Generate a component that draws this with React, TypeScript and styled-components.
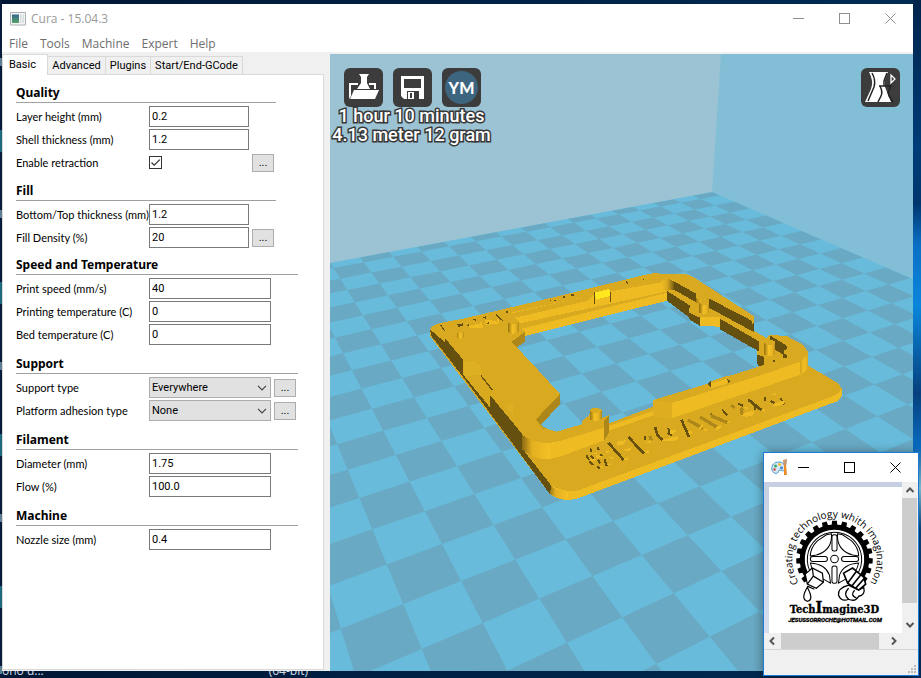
import React, { useId } from "react";
import styled, { createGlobalStyle } from "styled-components";

const Global = createGlobalStyle`
  * { box-sizing: border-box; }
  html, body, #root { height: 100%; margin: 0; }
  body { font-family: Roboto, "Liberation Sans", sans-serif; font-size: 11px; color: #000; overflow: hidden; }
  button, input, select { font: inherit; color: inherit; margin: 0; padding: 0; border-radius: 0; }
`;

/* ---------- desktop and windows ---------- */

const Desktop = styled.div`
  height: 100%;
  min-height: 400px;
  display: flex;
  flex-direction: column;
  padding: 4px 8px 0 2px;
  background:
    linear-gradient(#00244b, #003c78 22%, #00366e 30%, #0b6fc4 36%, #0a86dc 45%, #06407e 58%, #0a6cc0 66%, #8fdcf6 72%, #0a4d8e 78%, #06305f) right / 8px 100% no-repeat,
    repeating-linear-gradient(#0a1c3c 0 58px, #5c7f92 58px 66px, #061a3a 66px 130px, #1d6a80 130px 152px) left / 2px 100% no-repeat,
    linear-gradient(90deg, #001634, #002c55);
`;

const CuraWindow = styled.main`
  flex: 1;
  min-height: 0;
  display: flex;
  flex-direction: column;
  background: #fff;
`;

const TitleBar = styled.header`
  height: 29px;
  flex: none;
  display: flex;
  align-items: center;
  padding-left: 8px;
`;

const WindowTitle = styled.h1`
  flex: 1;
  margin: 0 0 0 5px;
  font: 400 12px "Open Sans", sans-serif;
  color: #999;
`;

const CaptionButton = styled.button<{ $width: number; $color: string }>`
  width: ${(p) => p.$width}px;
  height: 28px;
  flex: none;
  border: 0;
  background: none;
  display: grid;
  place-items: center;
  color: ${(p) => p.$color};
`;

const MenuBar = styled.nav`
  height: 19px;
  flex: none;
  display: flex;
  align-items: flex-end;
  gap: 12px;
  padding-left: 7px;
`;

const MenuItem = styled.button`
  border: 0;
  background: none;
  font: 12px/16px "Open Sans", sans-serif;
  color: #6d6d6d;
`;

const Body = styled.div`
  flex: 1;
  min-height: 0;
  display: flex;
  border-top: 2px solid #f0f0f0;
`;

/* ---------- settings ---------- */

const Side = styled.section`
  width: 328px;
  flex: none;
  display: flex;
  flex-direction: column;
  padding: 0 6px 1px 0;
  background: #f0f0f0;
`;

const TabList = styled.div`
  display: flex;
  align-items: flex-end;
  height: 20px;
`;

const Tab = styled.button<{ $active?: boolean; $width: number }>`
  position: relative;
  z-index: ${(p) => (p.$active ? 1 : 0)};
  width: ${(p) => p.$width}px;
  height: ${(p) => (p.$active ? 21 : 18)}px;
  margin-bottom: ${(p) => (p.$active ? -1 : 0)}px;
  border: 1px solid #d9d9d9;
  border-left-width: ${(p) => (p.$active ? 1 : 0)}px;
  border-bottom: 0;
  background: ${(p) => (p.$active ? "#fff" : "#f0f0f0")};
  text-align: ${(p) => (p.$active ? "left" : "center")};
  padding-left: ${(p) => (p.$active ? 6 : 0)}px;
  line-height: 16px;
  white-space: nowrap;
`;

const Panel = styled.div`
  flex: 1;
  min-height: 0;
  overflow: hidden;
  background: #fff;
  border: 1px solid #d9d9d9;
  padding: 1px 0 0 13px;
`;

const Group = styled.fieldset<{ $width: number }>`
  width: ${(p) => p.$width}px;
  min-width: 0;
  margin: 0;
  padding: 0;
  border: 0;
  display: flex;
  flex-direction: column;
  gap: 2px;
`;

const GroupTitle = styled.legend<{ $height: number }>`
  width: 100%;
  height: ${(p) => p.$height}px;
  margin-bottom: 3px;
  padding: 0;
  display: flex;
  align-items: flex-end;
  border-bottom: 1px solid #a0a0a0;
  font: 700 12px/18px "Noto Sans", "Open Sans", sans-serif;
`;

const Row = styled.div<{ $wide: boolean }>`
  display: grid;
  grid-template-columns: 130px ${(p) => (p.$wide ? 122 : 100)}px 22px;
  column-gap: 3px;
  align-items: center;
  height: 21px;
`;

const RowLabel = styled.label`
  white-space: nowrap;
  font-family: Lato, "Liberation Sans", sans-serif;
  line-height: 20px;
  color: #000;
`;

const TextField = styled.input`
  width: 100%;
  height: 21px;
  border: 1px solid #7a7a7a;
  background: #fff;
  padding: 0 0 1px 2px;
`;

const Tick = styled.input`
  appearance: none;
  width: 13px;
  height: 13px;
  border: 1px solid #333;
  background: #fff url("data:image/svg+xml,%3Csvg xmlns='http://www.w3.org/2000/svg' viewBox='0 0 11 11'%3E%3Cpath d='M1.5 5.5 4.2 8.2 9.8 2.6' fill='none' stroke='%23333' stroke-width='1.3'/%3E%3C/svg%3E");
`;

const Choice = styled.select`
  appearance: none;
  width: 100%;
  height: 21px;
  border: 1px solid #adadad;
  padding: 0 18px 0 2px;
  background: #e1e1e1 url("data:image/svg+xml,%3Csvg xmlns='http://www.w3.org/2000/svg' width='10' height='6' viewBox='0 0 10 6'%3E%3Cpath d='M1 .8 5 4.8 9 .8' fill='none' stroke='%23444' stroke-width='1.2'/%3E%3C/svg%3E") right 3px center no-repeat;
`;

const MoreButton = styled.button`
  width: 22px;
  height: 18px;
  border: 1px solid #adadad;
  background: #e1e1e1;
  line-height: 14px;
`;

/* ---------- 3D view ---------- */

const View = styled.section`
  position: relative;
  flex: 1;
  min-width: 0;
  overflow: hidden;
  background: #9bc3d4;
`;

const Scene = styled.svg`
  position: absolute;
  inset: 0;
  width: 100%;
  height: 100%;
  display: block;
`;

const Overlay = styled.div`
  position: absolute;
  inset: 14px 13px auto 14px;
  display: flex;
  gap: 10px;
`;

const ToolButton = styled.button<{ $end?: boolean }>`
  width: 39px;
  height: 39px;
  border: 0;
  border-radius: 6px;
  background: #3c3c3c;
  margin-left: ${(p) => (p.$end ? "auto" : "0")};
  display: grid;
  place-items: center;
`;

const Estimate = styled.output`
  position: absolute;
  top: 52px;
  left: 3px;
  width: 157px;
  display: flex;
  flex-direction: column;
  align-items: center;
  font: 500 18px/19px Roboto, "Liberation Sans", sans-serif;
  color: #fff;
  -webkit-text-stroke: 3px #383838;
  paint-order: stroke fill;
  white-space: nowrap;
`;

const horizon = { steepX: 128.6, steepY: -61, flatX: 2085, flatY: -62 };

function project(a: number, b: number): [number, number] | null {
  const ka = -0.0505 * a;
  const kb = 0.02847 * b;
  const w = 1 + ka + kb;
  if (w < 0.15) return null;
  return [
    (ka * horizon.steepX + kb * horizon.flatX + 347.7) / w,
    (ka * horizon.steepY + kb * horizon.flatY + 469.7) / w,
  ];
}

function floorTiles() {
  const tiles: string[] = [];
  for (let a = -12; a < 17; a++) {
    for (let b = -8; b < 18; b++) {
      if (Math.abs(a + b) % 2 === 0) continue;
      const top = Math.max(a, -11.5);
      const pts = [project(top, b), project(top, b + 1), project(a + 1, b + 1), project(a + 1, b)];
      if (pts.some((p) => !p)) continue;
      tiles.push("M" + pts.map((p) => `${p![0].toFixed(1)} ${p![1].toFixed(1)}`).join("L") + "Z");
    }
  }
  return tiles.join("");
}

const floorPath = floorTiles();

const TOP = "#d9aa20";
const FACE = "#efbb22";
const DARK = "#66500f";
const MID = "#ad8719";

function Post({ x, y, w, h }: { x: number; y: number; w: number; h: number }) {
  const r = w / 2;
  return (
    <g>
      <path d={`M${x} ${y}v${h}q${r} 10 ${w} 0v${-h}z`} fill="url(#round)" />
      <ellipse cx={x + r} cy={y} rx={r} ry={7} fill={TOP} />
    </g>
  );
}

function Printed() {
  return (
    <g transform="translate(420 260) scale(.33333)" shapeRendering="crispEdges">
      <defs>
        <linearGradient id="round">
          <stop offset="0" stopColor="#94720f" />
          <stop offset=".4" stopColor="#f4c024" />
          <stop offset=".75" stopColor="#e6b422" />
          <stop offset="1" stopColor="#b68c1a" />
        </linearGradient>
        <linearGradient id="hollow">
          <stop offset="0" stopColor="#efbb22" />
          <stop offset=".4" stopColor="#d6a71f" />
          <stop offset="1" stopColor="#66500f" />
        </linearGradient>
        <linearGradient id="bend">
          <stop offset="0" stopColor="#8a6a12" />
          <stop offset=".35" stopColor="#e3b020" />
          <stop offset="1" stopColor="#f6c125" />
        </linearGradient>
      </defs>
      <path
        fillRule="evenodd"
        fill={TOP}
        d="M30 210 36 199 60 189 130 176 400 112 660 48 700 40 735 41 795 42 815 48 1001 168 1001 212 1040 235 1050 225 1100 228 1150 255 1163 275 1163 316 1255 370 1265 385 1263 412 1240 428 480 713Q440 727 405 712L388 700 30 228Z
           M315 228 660 142 741 122 807 168 807 177 840 198 900 200 1012 268 1012 312 1017 320 920 350 865 372 700 422 700 440 567 490 567 465 545 475 545 450 510 450 508 465 485 485 485 493 410 515 385 508 360 495 420 433 420 402 345 320 290 262 315 245Z"
      />
      <path fill={FACE} d="M388 675Q430 698 475 691L1240 408 1258 396 1265 385V408Q1262 422 1240 428L480 713Q440 727 405 712L386 698Z" />
      <path fill="url(#bend)" d="M386 672Q410 694 445 695V720Q415 720 386 699Z" />
      <path fill={DARK} d="M30 208 75 247V235L130 300V345L210 442V405L305 520 310 570 395 678 388 700 255 520 130 352 34 228Z" />
      <path fill="none" stroke={DARK} strokeWidth="4" d="M62 195 74 213M183 347 217 390M228 163 248 182" />
      <path fill="#ddb023" d="M133 308 160 302 183 318 183 345 133 348ZM252 437 278 432V465Z" />

      <path fill={FACE} d="M275 158 520 104 760 60V90L300 190Z" />
      <path fill={FACE} d="M304 207 741 98V122L315 228V214Z" />
      <path fill={TOP} d="M268 162 520 104 505 122 290 172Z" />
      <path fill={MID} d="M315 215V245L290 262 275 245ZM420 402V433L362 495 348 478Z" />
      <path fill="#c29a1d" d="M348 478 362 495 380 505 368 507Z" />
      <path fill="#ffe720" d="M524 98 568 87 571 108 528 119Z" />
      <path fill={DARK} d="M521 97h4v36h-4zM569 95h4v30h-4zM390 119h3v5h-3zM402 119h5v3h-5zM429 108h5v7h-5zM453 103h8v6h-8zM616 62l10 6-4 4zM669 57h4v4h-4zM258 153h7v5h-7z" />
      <path fill={FACE} d="M145 194 185 185 190 203 150 205ZM195 180 235 176 238 190 200 195Z" />
      <path fill={DARK} d="M112 193l18-3v6l-14 5zM154 180l14-5v7zM188 172l10-4v9zM140 196l8-5v10zM216 177l10-2v8zM196 189l10-2v6z" />
      <path fill={TOP} d="M143 188 180 180 182 190 150 197ZM205 178 228 170 232 186Z" />
      <Post x={110} y={213} w={22} h={18} />
      <Post x={264} y={185} w={32} h={31} />

      <path fill="url(#hollow)" d="M726 60 748 58 766 66V90L741 92 726 89Z" />
      <path fill={DARK} d="M763 65 827 100V126L763 90ZM868 116 1001 185V216L868 144ZM741 93 809 136 807 172 741 122ZM805 157 840 173V198L807 177ZM900 176 1018 245V275L900 208Z" />
      <path fill={FACE} d="M840 170H900V200L840 198Z" />
      <path fill={TOP} d="M996 182 1001 168V190L997 194Z" />
      <Post x={827} y={112} w={38} h={15} />
      <Post x={838} y={127} w={30} h={31} />

      <path fill={DARK} d="M1050 226 1100 257V266L1092 272 1092 280 1100 285V293L1088 294 1088 283 1066 270V246L1050 240ZM1012 284 1032 290V315L1016 320 1012 310ZM1059 300h6v7h-6z" />
      <Post x={1032} y={247} w={34} h={36} />
      <path fill={FACE} d="M755 428 1030 342 1130 309Q1160 297 1163 280V318Q1160 340 1130 348L755 475Z" />
      <path fill="url(#round)" opacity=".35" d="M1140 304 1163 280V318L1140 345Z" />
      <path fill="#dfae20" d="M700 420 755 428V476L698 468Z" />
      <path fill={TOP} d="M700 420 860 372 1017 320 1130 309 1030 343 755 429Z" />
      <path fill={FACE} d="M872 370 922 356V372L872 384Z" />
      <path fill={TOP} d="M868 366 918 348 924 354 876 370Z" />
      <path fill={DARK} d="M863 372 872 364V382ZM922 358 934 363 924 369Z" />

      <path fill={FACE} d="M567 498 700 453V466L567 512Z" />
      <path fill={FACE} d="M340 550Q380 554 420 543L553 503V541L400 588Q370 597 340 590Z" />
      <path fill="url(#bend)" d="M306 525Q345 552 392 548V597Q345 602 306 568Z" />
      <path fill={FACE} d="M390 548 420 543 553 503V541L420 590 390 597Z" />
      <path fill={MID} d="M553 480 567 465V518L553 541Z" />
      <Post x={509} y={451} w={36} h={27} />

      <g fill="none" stroke={DARK} strokeWidth="8">
        <path d="M499 586 507 600M509 604 519 615M532 618 539 627M511 565 515 577M532 560 536 570M512 587 522 598M541 582 546 588M553 596 560 618M534 598 540 610" strokeWidth="6" />
        <path d="M565 548 611 600M625 531 672 581M706 500Q708 528 728 540M784 479 807 531M985 419 1025 451" />
        <path d="M674 527v12M745 504l4 22M602 590l10 10M872 462l14 12M906 448l16 18M1034 412v10M955 432l14 5M1005 432v18M1052 423l12 6M1082 415l10 18M742 520l14 6" strokeWidth="6" />
      </g>
      <g fill="none" stroke={MID} strokeWidth="10">
        <path d="M804 480 848 505M840 471 892 502M873 467 922 488M934 435 944 444M968 444Q958 455 972 464M690 528l4 14" />
      </g>
      <g fill={FACE}>
        <path d="M590 545 617 541 612 553 592 556ZM608 570 636 562 630 574ZM606 597 628 590 622 601ZM672 576 686 570V580ZM676 548 694 540V550ZM724 541Q748 548 772 540L774 528 748 534ZM750 510 772 512 752 524ZM806 526 816 520V512L806 515ZM838 500 848 492V502L838 508ZM846 511 860 505V512ZM890 512 902 504V496L888 500ZM918 490 930 483V490ZM965 468Q990 474 1002 462L1000 452 970 460ZM970 442 986 440 980 450ZM1060 437Q1082 440 1094 430L1092 422 1064 430ZM1050 405 1068 400V406ZM1024 452 1034 446V452ZM506 600 526 594V604ZM528 584 546 590 530 594ZM556 570 572 574 560 580ZM562 590 582 590 578 598ZM538 620 550 616V624ZM560 615 574 608V616ZM518 580 532 576V583Z" />
      </g>
    </g>
  );
}

/* ---------- small paint window ---------- */

const PaintWindow = styled.aside`
  position: fixed;
  right: 2px;
  bottom: 2px;
  width: 156px;
  height: 224px;
  display: flex;
  flex-direction: column;
  border: 1px solid #1c7cd5;
  background: #f0f0f0;
  box-shadow: 0 1px 10px rgba(0, 0, 0, 0.4);
`;

const PaintTitle = styled.header`
  height: 29px;
  flex: none;
  display: flex;
  align-items: center;
  justify-content: space-between;
  padding-left: 7px;
  background: #fff;
`;

const PaintButtons = styled.div`
  display: flex;
  margin-left: -9px;
`;

const PaintBody = styled.div`
  flex: 1;
  display: grid;
  grid-template-columns: 1fr 16px;
  grid-template-rows: 1fr 16px;
  min-height: 0;
`;

const PaintArea = styled.div`
  padding: 5px 0 0 5px;
  background: linear-gradient(#c6d0e2, #d5deee);
  min-height: 0;
`;

const Artwork = styled.svg`
  display: block;
  width: 100%;
  height: 100%;
  background: #fff;
`;

const ScrollTrack = styled.div<{ $vertical?: boolean }>`
  display: flex;
  flex-direction: ${(p) => (p.$vertical ? "column" : "row")};
  background: #f0f0f0;
`;

const ScrollArrow = styled.button`
  width: 16px;
  height: 16px;
  flex: none;
  border: 0;
  background: none;
  display: grid;
  place-items: center;
`;

const ScrollThumb = styled.div<{ $vertical?: boolean }>`
  flex: 1;
  margin: ${(p) => (p.$vertical ? "0 1px 14px 0" : "0 7px 0 1px")};
  background: #cdcdcd;
`;

const PaintStatus = styled.footer`
  height: 26px;
  flex: none;
  border-top: 1px solid #d7d7d7;
  display: flex;
  justify-content: flex-end;
  align-items: flex-end;
  padding: 2px;
`;

const DesktopLabels = styled.footer`
  height: 7px;
  flex: none;
  display: flex;
  align-items: flex-end;
  gap: 225px;
  overflow: hidden;
  font: 12px/14px "Open Sans", sans-serif;
  color: #d4dce6;
  white-space: nowrap;
`;

function Arrow({ d }: { d: string }) {
  return (
    <svg width="10" height="10" viewBox="0 0 10 10">
      <path d={d} fill="none" stroke="#555" strokeWidth="2" />
    </svg>
  );
}

const gearTeeth = Array.from({ length: 17 }, (_, i) => -124 + i * 15.5);

function Logo() {
  return (
    <Artwork viewBox="769 488 133 145" preserveAspectRatio="xMidYMid slice" role="img" aria-label="TechImagine3D logo">
      <defs>
        <path id="curve" d="M804.8 590A42 42 0 1 1 864.2 590" />
      </defs>
      <text fontFamily="Open Sans, sans-serif" fontSize="10" textAnchor="middle">
        <textPath href="#curve" startOffset="50%">Creating technology whith imagination</textPath>
      </text>
      <g transform="translate(834.5 559.5)">
        {gearTeeth.map((t) => (
          <path key={t} transform={`rotate(${t})`} d="M-3.2 -30-2.4-38H2.4L3.2-30Z" />
        ))}
        <path d="M-26 19A32 32 0 1 1 26 19" fill="none" stroke="#000" strokeWidth="5" />
        <path d="M-22 16A27 27 0 1 1 22 16" fill="none" stroke="#000" strokeWidth="1" />
        <g fill="#fff" stroke="#000" strokeWidth="1">
          <path d="M-17-18-8-24-3-25V-21Q-4-8-18-4L-24-3Q-24-11-17-18ZM17-18 8-24 3-25V-21Q4-8 18-4L24-3Q24-11 17-18ZM-24 4Q-9 5-5 16L-4 24-11 20Q-22 15-24 4ZM24 4Q9 5 5 16L4 24 11 20Q22 15 24 4Z" />
          <rect x="-2.5" y="-24" width="5" height="16" rx="2" />
          <rect x="-2.5" y="7" width="5" height="17" rx="2" />
          <rect x="-24" y="-2.5" width="17" height="5" rx="2.5" />
          <rect x="7" y="-2.5" width="17" height="5" rx="2.5" />
          <circle r="3.8" />
          <path strokeWidth="1.2" d="M-29 15-22 9-12 14-11 23-18 29-27 25ZM-22 9-21 17-27 25M-21 17-11 23" />
          <path strokeWidth="1.2" d="M-27 28Q-34 40-27 42-20 41-27 28ZM-27 27-20 30" />
          <path strokeWidth="1.6" d="M9 14 18 9 29 18 31 25 24 31 13 24ZM13 24 22 12M17 27 26 16M21 29 29 20" />
          <path strokeWidth="1.3" d="M14 26Q3 29 4 36 7 43 14 40 21 43 24 37 31 36 29 28L24 31ZM14 29Q8 35 14 40M20 31Q15 36 22 39" />
        </g>
      </g>
      <text x="834.5" y="613" textAnchor="middle" fontFamily="DejaVu Serif Condensed, DejaVu Serif, serif" fontWeight="700" fontSize="11" stroke="#000" strokeWidth=".3">
        Tech<tspan fontSize="16">I</tspan>magine3D
      </text>
      <text x="835" y="622" textAnchor="middle" fontFamily="Roboto, sans-serif" fontWeight="700" fontStyle="italic" fontSize="6" stroke="#000" strokeWidth=".3">
        JESUSSORROCHE@HOTMAIL.COM
      </text>
    </Artwork>
  );
}

function CaptionButtons({ width, color }: { width: number; color: string }) {
  return (
    <>
      <CaptionButton $width={width} $color={color} aria-label="Minimize">
        <svg width="11" height="11"><path d="M0 5.5h11" stroke="currentColor" /></svg>
      </CaptionButton>
      <CaptionButton $width={width} $color={color} aria-label="Maximize">
        <svg width="11" height="11"><rect x=".5" y=".5" width="10" height="10" fill="none" stroke="currentColor" /></svg>
      </CaptionButton>
      <CaptionButton $width={width} $color={color} aria-label="Close">
        <svg width="11" height="11"><path d="M.5 .5l10 10M10.500 .5l-10 10" fill="none" stroke="currentColor" /></svg>
      </CaptionButton>
    </>
  );
}

type Setting = { label: string; value: string; kind?: "check" | "select"; more?: boolean };

const groups: { title: string; wide: boolean; height: number; rows: Setting[] }[] = [
  { title: "Quality", wide: false, height: 27, rows: [
    { label: "Layer height (mm)", value: "0.2" },
    { label: "Shell thickness (mm)", value: "1.2" },
    { label: "Enable retraction", value: "on", kind: "check", more: true },
  ] },
  { title: "Fill", wide: false, height: 28, rows: [
    { label: "Bottom/Top thickness (mm)", value: "1.2" },
    { label: "Fill Density (%)", value: "20", more: true },
  ] },
  { title: "Speed and Temperature", wide: true, height: 27, rows: [
    { label: "Print speed (mm/s)", value: "40" },
    { label: "Printing temperature (C)", value: "0" },
    { label: "Bed temperature (C)", value: "0" },
  ] },
  { title: "Support", wide: true, height: 29, rows: [
    { label: "Support type", value: "Everywhere", kind: "select", more: true },
    { label: "Platform adhesion type", value: "None", kind: "select", more: true },
  ] },
  { title: "Filament", wide: true, height: 29, rows: [
    { label: "Diameter (mm)", value: "1.75" },
    { label: "Flow (%)", value: "100.0" },
  ] },
  { title: "Machine", wide: true, height: 29, rows: [{ label: "Nozzle size (mm)", value: "0.4" }] },
];

function SettingRow({ item, wide }: { item: Setting; wide: boolean }) {
  const id = useId();
  return (
    <Row $wide={wide}>
      <RowLabel htmlFor={id}>{item.label}</RowLabel>
      {item.kind === "check" ? (
        <Tick id={id} type="checkbox" defaultChecked />
      ) : item.kind === "select" ? (
        <Choice id={id}><option>{item.value}</option></Choice>
      ) : (
        <TextField id={id} defaultValue={item.value} />
      )}
      {item.more && <MoreButton aria-label={`${item.label} options`}>...</MoreButton>}
    </Row>
  );
}

export default function App() {
  return (
    <>
      <Global />
      <Desktop>
        <CuraWindow>
          <TitleBar>
            <svg width="16" height="14" viewBox="0 0 16 14">
              <defs><linearGradient id="app" x2="0" y2="1"><stop stopColor="#33658c" /><stop offset="1" stopColor="#57a56a" /></linearGradient></defs>
              <path d="M.5 .5h15v12.500H.5z" fill="#f5f5f5" stroke="#a8b0b4" />
              <path d="M2 2.500h7v8.500H2z" fill="url(#app)" />
              <path d="M10 2.500h1.500v8.500H10zM12.500 2.500H14v8.500h-1.500z" fill="#d5dde0" />
            </svg>
            <WindowTitle>Cura - 15.04.3</WindowTitle>
            <CaptionButtons width={46} color="#8f8f8f" />
          </TitleBar>
          <MenuBar>
            {["File", "Tools", "Machine", "Expert", "Help"].map((m) => <MenuItem key={m}>{m}</MenuItem>)}
          </MenuBar>
          <Body>
            <Side>
              <TabList role="tablist">
                <Tab role="tab" aria-selected $active $width={46}>Basic</Tab>
                <Tab role="tab" $width={58}>Advanced</Tab>
                <Tab role="tab" $width={45}>Plugins</Tab>
                <Tab role="tab" $width={92}>Start/End-GCode</Tab>
              </TabList>
              <Panel>
                {groups.map((g) => (
                  <Group key={g.title} $width={g.wide ? 282 : 260}>
                    <GroupTitle $height={g.height}>{g.title}</GroupTitle>
                    {g.rows.map((r) => <SettingRow key={r.label} item={r} wide={g.wide} />)}
                  </Group>
                ))}
              </Panel>
            </Side>
            <View>
              <Scene viewBox="330 54 583 617" preserveAspectRatio="xMidYMid slice" role="img" aria-label="Print preview">
                <path d="M330 54H721L712 193 330 264Z" fill="#9bc3d4" />
                <path d="M721 54H913V280L712 193Z" fill="#82bfd7" />
                <path d="M330 263 712 192 913 279V671H330Z" fill="#68bbda" />
                <path d={floorPath} fill="#69a9c3" />
                <Printed />
              </Scene>
              <Overlay>
                <ToolButton aria-label="Load">
                  <svg width="33" height="31" viewBox="0 0 33 31" fill="#fff">
                    <path d="M12 2h10l-2 3v6l3 6H10l4-6V5Z" />
                    <path d="M2 11h9v2H4v11l-2 3ZM22 11h7v6h-2v-4h-5Z" />
                    <path d="M7 18H32l-4 9H3Z" />
                  </svg>
                </ToolButton>
                <ToolButton aria-label="Save">
                  <svg width="25" height="25" viewBox="0 0 25 25">
                    <path fillRule="evenodd" fill="#fff" d="M1 1H24V24H19V16H7V24H4L1 21ZM4 4V13H21V4ZM8 17h6v7H8ZM10 18v5h2v-5Z" />
                  </svg>
                </ToolButton>
                <ToolButton aria-label="YouMagine">
                  <svg width="35" height="35" viewBox="0 0 35 35">
                    <circle cx="17.500" cy="17.500" r="16.500" fill="#3d6580" />
                    <text x="17.500" y="23.500" textAnchor="middle" fill="#fff" fontFamily="Lato, sans-serif" fontWeight="900" fontSize="16">YM</text>
                  </svg>
                </ToolButton>
                <ToolButton $end aria-label="View mode">
                  <svg width="33" height="33" viewBox="0 0 33 33">
                    <path d="M5 1H24L21 9V16L27 31H1L7 18Q10 10 5 1Z" fill="#fff" />
                    <path d="M8 2Q12 9 10 16L4 30M15 15H27L24 21 25 25 29 31M16 15Q19 21 17 25L14 31M23 2 20 10V15" fill="none" stroke="#222" strokeWidth="1.500" />
                    <path d="M27 4V12L31 8Z" fill="#3c3c3c" stroke="#fff" strokeWidth="1.300" />
                  </svg>
                </ToolButton>
              </Overlay>
              <Estimate>
                <span>1 hour 10 minutes</span>
                <span>4.13 meter 12 gram</span>
              </Estimate>
            </View>
          </Body>
        </CuraWindow>
        <DesktopLabels><span>ono d...</span><span>(64-bit)</span></DesktopLabels>
      </Desktop>
      <PaintWindow>
        <PaintTitle>
          <svg width="17" height="17" viewBox="0 0 17 17">
            <path d="M8 3C3 3 .5 6 .8 10 1 14 5 15 6.500 14 8 13 7 11 9 11 11 12 14 13 14 8 14 5 11 3 8 3Z" fill="#d4e9f7" stroke="#5097c8" />
            <circle cx="4.500" cy="7" r="1.500" fill="#39a96b" /><circle cx="8.500" cy="5.500" r="1.500" fill="#f3bd2f" />
            <circle cx="3.500" cy="10.500" r="1.300" fill="#d84b3f" /><circle cx="10.500" cy="9" r="1.400" fill="#3c7fd0" />
            <path d="M13 6h2l1 10h-3z" fill="#f08a24" /><path d="M12 1 16 0 15.500 6h-3z" fill="#c99a72" />
          </svg>
          <PaintButtons><CaptionButtons width={46} color="#000" /></PaintButtons>
        </PaintTitle>
        <PaintBody>
          <PaintArea><Logo /></PaintArea>
          <ScrollTrack $vertical>
            <ScrollArrow aria-label="Scroll up"><Arrow d="M1.500 7 5 3.500 8.500 7" /></ScrollArrow>
            <ScrollThumb $vertical />
            <ScrollArrow aria-label="Scroll down"><Arrow d="M1.500 3 5 6.500 8.500 3" /></ScrollArrow>
          </ScrollTrack>
          <ScrollTrack>
            <ScrollArrow aria-label="Scroll left"><Arrow d="M7 1.500 3.500 5 7 8.500" /></ScrollArrow>
            <ScrollThumb />
            <ScrollArrow aria-label="Scroll right"><Arrow d="M3 1.500 6.500 5 3 8.500" /></ScrollArrow>
          </ScrollTrack>
        </PaintBody>
        <PaintStatus>
          <svg width="8" height="8" fill="#bcbcbc"><path d="M6 0h2v2H6zM3 3h2v2H3zM6 3h2v2H6zM0 6h2v2H0zM3 6h2v2H3zM6 6h2v2H6z" /></svg>
        </PaintStatus>
      </PaintWindow>
    </>
  );
}
